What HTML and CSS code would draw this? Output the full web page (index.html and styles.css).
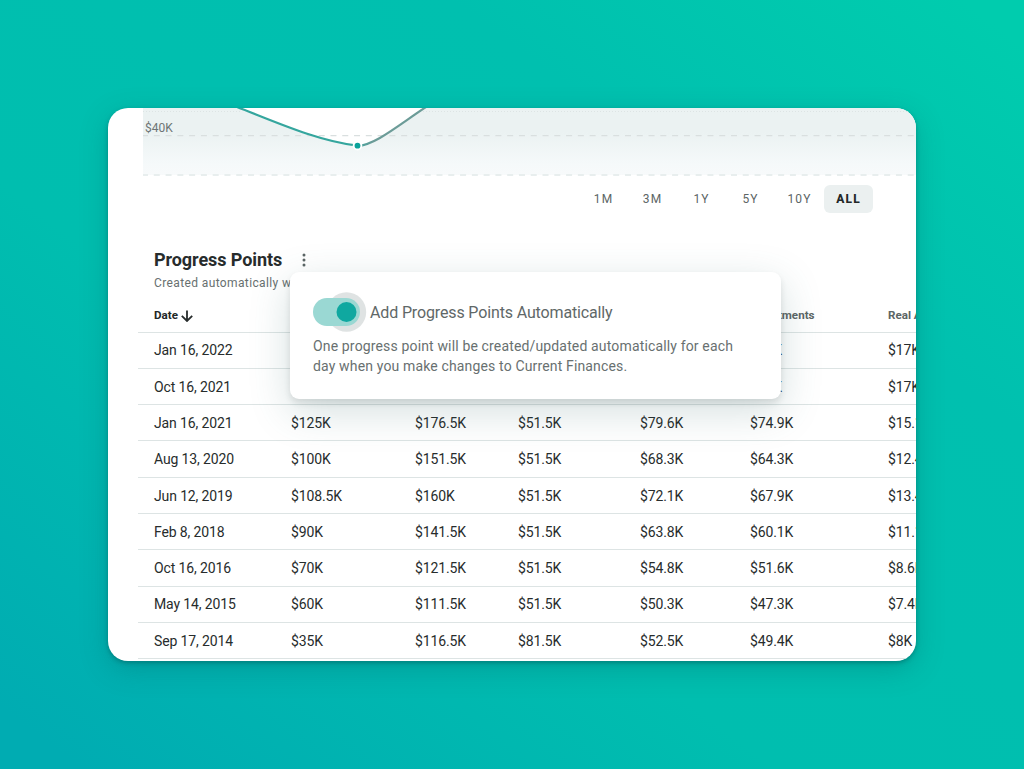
FILE: index.html
```html
<!DOCTYPE html>
<html lang="en">
<head>
    <meta charset="UTF-8">
    <meta name="viewport" content="width=device-width, initial-scale=1.0">
    <title>Progress Points</title>
    <link rel="stylesheet" href="styles.css">
</head>
<body>
    <main class="card">
        <svg class="chart" width="774" height="69" viewBox="0 0 774 69">
            <defs>
                <linearGradient id="area" x1="0" y1="0" x2="0" y2="69" gradientUnits="userSpaceOnUse">
                    <stop offset="0" stop-color="#ebf2f2"/>
                    <stop offset="0.35" stop-color="#ebf2f2"/>
                    <stop offset="0.8" stop-color="#f5f9fa"/>
                    <stop offset="1" stop-color="#f8fafb"/>
                </linearGradient>
                <linearGradient id="line" x1="94" y1="0" x2="284" y2="0" gradientUnits="userSpaceOnUse">
                    <stop offset="0" stop-color="#35a69e"/>
                    <stop offset="0.62" stop-color="#35a69e"/>
                    <stop offset="0.72" stop-color="#6c9c98"/>
                    <stop offset="1" stop-color="#6c9c98"/>
                </linearGradient>
            </defs>
            <path d="M1 0H97C136 15 176 33 215.500 37.700C232 38 258 16 284 -1H774V67H1Z" fill="url(#area)"/>
            <path class="grid-dots" d="M1 3.500H98M278 3.500H774"/>
            <path class="grid-line" d="M1 27.700H774"/>
            <path class="grid-line grid-base" d="M1 67H774"/>
            <path class="curve" d="M95 -1C136 15 176 33 215.500 37.700C232 38 258 16 284 -1" stroke="url(#line)"/>
            <circle cx="215.500" cy="37.700" r="4.800" fill="#fff"/>
            <circle cx="215.500" cy="37.700" r="2.900" fill="#0ba39b"/>
            <text class="axis-label" x="3" y="24">$40K</text>
        </svg>

        <div class="ranges">
            <button class="range">1M</button>
            <button class="range">3M</button>
            <button class="range">1Y</button>
            <button class="range">5Y</button>
            <button class="range">10Y</button>
            <button class="range active">ALL</button>
        </div>

        <section class="points">
            <header class="points-header">
                <h2>Progress Points</h2>
                <svg class="more" width="6" height="16" viewBox="0 0 6 16">
                    <circle cx="3" cy="3" r="1.500"/>
                    <circle cx="3" cy="8" r="1.500"/>
                    <circle cx="3" cy="13" r="1.500"/>
                </svg>
            </header>
            <p class="subtitle">Created automatically when</p>

            <table>
                <colgroup>
                    <col class="c-date">
                    <col class="c-1">
                    <col class="c-2">
                    <col class="c-3">
                    <col class="c-4">
                    <col class="c-5">
                    <col class="c-6">
                </colgroup>
                <thead>
                    <tr>
                        <th class="sorted">Date<svg class="arrow" width="12" height="12" viewBox="0 0 12 12"><path d="M6 0.500V11M0.800 5.800L6 11L11.200 5.800"/></svg></th>
                        <th></th>
                        <th></th>
                        <th></th>
                        <th></th>
                        <th>Investments</th>
                        <th>Real Assets</th>
                    </tr>
                </thead>
                <tbody>
                    <tr><td>Jan 16, 2022</td><td></td><td></td><td></td><td></td><td>$85K</td><td>$17K</td></tr>
                    <tr><td>Oct 16, 2021</td><td></td><td></td><td></td><td></td><td>$85K</td><td>$17K</td></tr>
                    <tr><td>Jan 16, 2021</td><td>$125K</td><td>$176.5K</td><td>$51.5K</td><td>$79.6K</td><td>$74.9K</td><td>$15.1K</td></tr>
                    <tr><td>Aug 13, 2020</td><td>$100K</td><td>$151.5K</td><td>$51.5K</td><td>$68.3K</td><td>$64.3K</td><td>$12.4K</td></tr>
                    <tr><td>Jun 12, 2019</td><td>$108.5K</td><td>$160K</td><td>$51.5K</td><td>$72.1K</td><td>$67.9K</td><td>$13.4K</td></tr>
                    <tr><td>Feb 8, 2018</td><td>$90K</td><td>$141.5K</td><td>$51.5K</td><td>$63.8K</td><td>$60.1K</td><td>$11.1K</td></tr>
                    <tr><td>Oct 16, 2016</td><td>$70K</td><td>$121.5K</td><td>$51.5K</td><td>$54.8K</td><td>$51.6K</td><td>$8.6K</td></tr>
                    <tr><td>May 14, 2015</td><td>$60K</td><td>$111.5K</td><td>$51.5K</td><td>$50.3K</td><td>$47.3K</td><td>$7.4K</td></tr>
                    <tr><td>Sep 17, 2014</td><td>$35K</td><td>$116.5K</td><td>$81.5K</td><td>$52.5K</td><td>$49.4K</td><td>$8K</td></tr>
                </tbody>
            </table>

            <div class="popup">
                <div class="popup-row">
                    <svg class="toggle" width="54" height="40" viewBox="0 0 54 40">
                        <circle cx="33.500" cy="20" r="19.700" fill="#dfe3e3"/>
                        <rect x="0" y="6" width="47" height="28" rx="14" fill="#9ad8d3"/>
                        <circle cx="33.500" cy="20" r="10" fill="#0fa8a0"/>
                    </svg>
                    <span class="popup-title">Add Progress Points Automatically</span>
                </div>
                <p>One progress point will be created/updated automatically for each day when you make changes to Current Finances.</p>
            </div>
        </section>
    </main>
</body>
</html>
```
FILE: styles.css
```css
* {
    box-sizing: border-box;
}

body {
    margin: 0;
    height: 769px;
    padding: 108px;
    overflow: hidden;
    font-family: Roboto, sans-serif;
    color: #272c2c;
    background: linear-gradient(37deg, #00acb2 4%, #00beaf 38%, #00c0af 72%, #00ccae 97%);
}

.card {
    width: 808px;
    height: 553px;
    overflow: hidden;
    border-radius: 20px;
    background: #fff;
    box-shadow: 0 2px 4px rgba(0, 80, 80, 0.4), 0 8px 28px rgba(0, 90, 90, 0.28);
}

.chart {
    display: block;
    margin-left: 34px;
}

.axis-label {
    font-size: 12px;
    fill: #6d7575;
}

.grid-line {
    stroke: #d9dfdf;
    stroke-width: 1.2;
    stroke-dasharray: 6 5.78;
    stroke-dashoffset: 1;
}

.grid-base {
    stroke: #e8eeee;
    stroke-width: 2;
}

.grid-dots {
    stroke: #dde4e4;
    stroke-width: 1;
    stroke-dasharray: 1 2;
}

.curve {
    fill: none;
    stroke-width: 2.2;
}

.ranges {
    display: flex;
    justify-content: flex-end;
    height: 28px;
    margin: 8px 43px 0 0;
}

.range {
    width: 49px;
    padding: 0;
    border: none;
    border-radius: 6px;
    background: none;
    font-family: inherit;
    font-size: 12px;
    letter-spacing: 1.1px;
    color: #5c6565;
}

.range.active {
    background: #ebf0f0;
    font-weight: 800;
    letter-spacing: 1.2px;
    color: #222727;
}

.points {
    position: relative;
    width: 900px;
    margin-left: 30px;
}

.points-header {
    display: flex;
    align-items: center;
    gap: 19px;
    height: 24px;
    margin-top: 35px;
    padding: 0 16px;
}

h2 {
    margin: 0;
    font-size: 18px;
    font-weight: 700;
    line-height: 24px;
    letter-spacing: -0.08px;
}

.more {
    fill: #5c6565;
}

.subtitle {
    margin: 3px 0 1px 16px;
    font-size: 12px;
    line-height: 16px;
    letter-spacing: 0.38px;
    color: #687070;
}

table {
    width: 900px;
    table-layout: fixed;
    border-collapse: separate;
    border-spacing: 0;
}

.c-date { width: 137px; }
.c-1 { width: 124px; }
.c-2 { width: 103px; }
.c-3 { width: 122px; }
.c-4 { width: 110px; }
.c-5 { width: 138px; }

th,
td {
    padding: 0 0 0 16px;
    border-bottom: 1px solid #dde4e4;
    text-align: left;
    white-space: nowrap;
}

th {
    height: 40.5px;
    padding-top: 7px;
    font-size: 11.6px;
    font-weight: 700;
    color: #5c6565;
}

th.sorted {
    color: #222727;
}

td {
    height: 36.3px;
    padding-top: 0.4px;
    font-size: 14px;
    letter-spacing: -0.13px;
}

.arrow {
    margin-left: 3px;
    vertical-align: -3px;
    fill: none;
    stroke: #272c2c;
    stroke-width: 1.8;
}

.popup {
    position: absolute;
    top: 24px;
    left: 152px;
    width: 491px;
    height: 127px;
    padding: 26px 23px;
    border-radius: 9px;
    background: #fff;
    box-shadow: 0 4px 6px rgba(40, 50, 50, 0.12), 0 12px 40px rgba(60, 110, 110, 0.22);
}

.popup-row {
    display: flex;
    align-items: center;
    gap: 3px;
    height: 28px;
}

.toggle {
    flex: none;
}

.popup-title {
    font-size: 16px;
    letter-spacing: -0.14px;
    color: #5f6868;
}

.popup p {
    margin: 10px 0 0;
    font-size: 14px;
    line-height: 20px;
    letter-spacing: 0.15px;
    color: #687070;
}
```
